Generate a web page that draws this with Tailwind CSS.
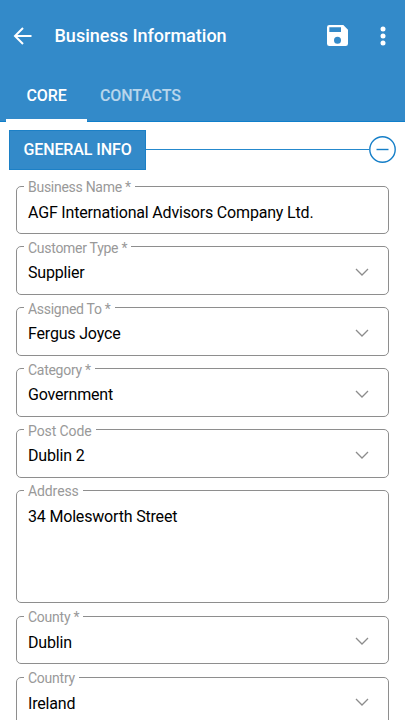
<!DOCTYPE html>
<html lang="en">
<head>
<meta charset="utf-8">
<meta name="viewport" content="width=device-width, initial-scale=1">
<title>Business Information</title>
<script src="https://cdn.jsdelivr.net/npm/@tailwindcss/browser@4"></script>
</head>
<body class="h-[720px] w-[405px] overflow-hidden bg-white font-['Roboto',sans-serif] text-black">
<header class="flex h-[122px] flex-col border-b border-[#0f7fcb] bg-[#338ac9] text-white">
  <div class="flex h-[71px] items-center pl-[13px] pr-[19.500px]">
    <svg class="size-[20px] shrink-0" viewBox="0 0 20 20" fill="none" stroke="currentColor" stroke-width="2"><path d="M18.500 10H2M10 2l-8 8 8 8"/></svg>
    <h1 class="ml-[21.500px] flex-1 whitespace-nowrap text-[18px] font-medium leading-6">Business Information</h1>
    <svg class="mr-[31.500px] h-[21px] w-[21px] shrink-0" viewBox="3 3 18 18" fill="currentColor"><path d="M17 3H5a2 2 0 0 0-2 2v14a2 2 0 0 0 2 2h14a2 2 0 0 0 2-2V7l-4-4zm-5 16a3 3 0 1 1 0-6 3 3 0 0 1 0 6zm3-10H5V5h10v4z"/></svg>
    <svg class="h-[20px] w-[6px] shrink-0" viewBox="0 0 6 20" fill="currentColor"><circle cx="3" cy="3" r="2.500"/><circle cx="3" cy="10" r="2.500"/><circle cx="3" cy="17" r="2.500"/></svg>
  </div>
  <nav class="flex flex-1 pl-[6px] text-[16px] font-medium tracking-[-0.1px]">
    <div class="-mb-px flex w-[81px] justify-center border-b-[3px] border-white pt-[13px] leading-6">CORE</div>
    <div class="ml-[13px] pt-[13px] leading-6 text-white/65">CONTACTS</div>
  </nav>
</header>
<main>
  <div class="flex items-center px-[9px] pt-[7px]">
    <h2 class="mt-px flex h-[40px] w-[137px] items-center justify-center border border-[#1c80c6] bg-[#338ac9] text-[16px] font-medium tracking-[-0.1px] text-white">GENERAL INFO</h2>
    <div class="h-px flex-1 bg-[#2589cd]"></div>
    <svg class="size-[27px]" viewBox="0 0 27 27" fill="none" stroke="#167fc8" stroke-width="1.400"><circle cx="13.500" cy="13.500" r="12.700"/><path d="M7.500 13.500h12"/></svg>
  </div>
  <form class="flex flex-col gap-[4.900px] pl-[15.500px] pr-4 pt-[8px]">
    <fieldset class="h-[56px] rounded-[5px] border border-[#8e8e8e] pl-[7.500px]"><legend class="h-4 px-[4px] text-[14px] leading-[18px] tracking-[-0.28px] text-[#999]">Business Name *</legend><div class="pl-[4px] pt-[6.600px] text-[16px] leading-6 tracking-[-0.18px]">AGF International Advisors Company Ltd.</div></fieldset>
    <fieldset class="h-[56px] rounded-[5px] border border-[#8e8e8e] pl-[7.500px]"><legend class="h-4 px-[4px] text-[14px] leading-[18px] tracking-[-0.28px] text-[#999]">Customer Type *</legend><div class="flex justify-between pl-[4px] pr-[19px] pt-[6.600px] text-[16px] leading-6 tracking-[-0.18px]">Supplier<svg class="mt-[6.500px] h-[8px] w-[14px]" viewBox="0 0 14 8" fill="none" stroke="#8c8c8c" stroke-width="1.300"><path d="m1 1 6 6 6-6"/></svg></div></fieldset>
    <fieldset class="h-[56px] rounded-[5px] border border-[#8e8e8e] pl-[7.500px]"><legend class="h-4 px-[4px] text-[14px] leading-[18px] tracking-[-0.28px] text-[#999]">Assigned To *</legend><div class="flex justify-between pl-[4px] pr-[19px] pt-[6.600px] text-[16px] leading-6 tracking-[-0.18px]">Fergus Joyce<svg class="mt-[6.500px] h-[8px] w-[14px]" viewBox="0 0 14 8" fill="none" stroke="#8c8c8c" stroke-width="1.300"><path d="m1 1 6 6 6-6"/></svg></div></fieldset>
    <fieldset class="h-[56px] rounded-[5px] border border-[#8e8e8e] pl-[7.500px]"><legend class="h-4 px-[4px] text-[14px] leading-[18px] tracking-[-0.28px] text-[#999]">Category *</legend><div class="flex justify-between pl-[4px] pr-[19px] pt-[6.600px] text-[16px] leading-6 tracking-[-0.18px]">Government<svg class="mt-[6.500px] h-[8px] w-[14px]" viewBox="0 0 14 8" fill="none" stroke="#8c8c8c" stroke-width="1.300"><path d="m1 1 6 6 6-6"/></svg></div></fieldset>
    <fieldset class="h-[56px] rounded-[5px] border border-[#8e8e8e] pl-[7.500px]"><legend class="h-4 px-[4px] text-[14px] leading-[18px] tracking-[-0.1px] text-[#999]">Post Code</legend><div class="flex justify-between pl-[4px] pr-[19px] pt-[6.600px] text-[16px] leading-6 tracking-[-0.18px]">Dublin 2<svg class="mt-[6.500px] h-[8px] w-[14px]" viewBox="0 0 14 8" fill="none" stroke="#8c8c8c" stroke-width="1.300"><path d="m1 1 6 6 6-6"/></svg></div></fieldset>
    <fieldset class="h-[121px] rounded-[5px] border border-[#8e8e8e] pl-[7.500px]"><legend class="h-4 px-[4px] text-[14px] leading-[18px] tracking-[-0.1px] text-[#999]">Address</legend><div class="pl-[4px] pt-[6.600px] text-[16px] leading-6 tracking-[-0.18px]">34 Molesworth Street</div></fieldset>
    <fieldset class="h-[56px] rounded-[5px] border border-[#8e8e8e] pl-[7.500px]"><legend class="h-4 px-[4px] text-[14px] leading-[18px] tracking-[-0.25px] text-[#999]">County *</legend><div class="flex justify-between pl-[4px] pr-[19px] pt-[6.600px] text-[16px] leading-6 tracking-[-0.18px]">Dublin<svg class="mt-[6.500px] h-[8px] w-[14px]" viewBox="0 0 14 8" fill="none" stroke="#8c8c8c" stroke-width="1.300"><path d="m1 1 6 6 6-6"/></svg></div></fieldset>
    <fieldset class="h-[56px] rounded-[5px] border border-[#8e8e8e] pl-[7.500px]"><legend class="h-4 px-[4px] text-[14px] leading-[18px] tracking-[-0.25px] text-[#999]">Country</legend><div class="flex justify-between pl-[4px] pr-[19px] pt-[6.600px] text-[16px] leading-6 tracking-[-0.18px]">Ireland<svg class="mt-[6.500px] h-[8px] w-[14px]" viewBox="0 0 14 8" fill="none" stroke="#8c8c8c" stroke-width="1.300"><path d="m1 1 6 6 6-6"/></svg></div></fieldset>
  </form>
</main>
</body>
</html>
